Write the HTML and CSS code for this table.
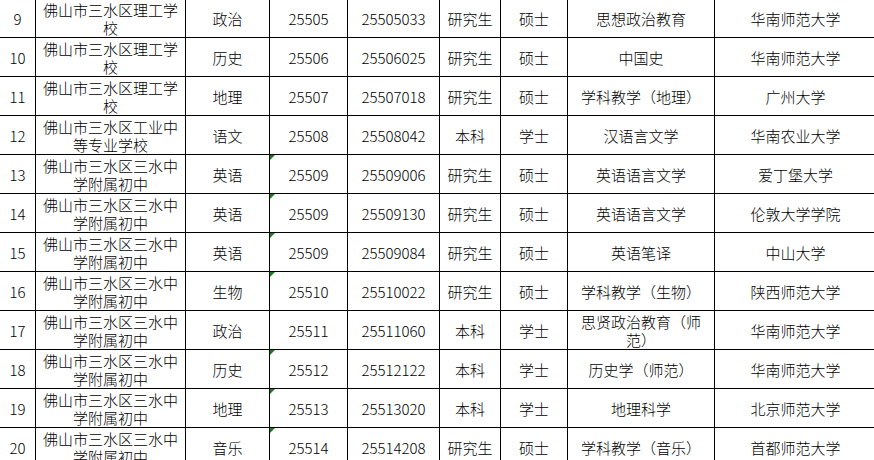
FILE: index.html
```html
<!DOCTYPE html>
<html lang="zh-CN">
<head>
<meta charset="utf-8">
<title>招聘名单</title>
<link rel="stylesheet" href="styles.css">
</head>
<body>
<table class="sheet">
<colgroup>
<col class="c1"><col class="c2"><col class="c3"><col class="c4"><col class="c5"><col class="c6"><col class="c7"><col class="c8"><col class="c9">
</colgroup>
<tbody>
<tr><td>9</td><td>佛山市三水区理工学校</td><td>政治</td><td>25505</td><td>25505033</td><td>研究生</td><td>硕士</td><td>思想政治教育</td><td>华南师范大学</td></tr>
<tr><td>10</td><td>佛山市三水区理工学校</td><td>历史</td><td>25506</td><td>25506025</td><td>研究生</td><td>硕士</td><td>中国史</td><td>华南师范大学</td></tr>
<tr><td>11</td><td>佛山市三水区理工学校</td><td>地理</td><td>25507</td><td>25507018</td><td>研究生</td><td>硕士</td><td>学科教学（地理）</td><td>广州大学</td></tr>
<tr><td>12</td><td>佛山市三水区工业中等专业学校</td><td>语文</td><td>25508</td><td>25508042</td><td>本科</td><td>学士</td><td>汉语言文学</td><td>华南农业大学</td></tr>
<tr><td>13</td><td>佛山市三水区三水中学附属初中</td><td>英语</td><td class="flag">25509</td><td>25509006</td><td>研究生</td><td>硕士</td><td>英语语言文学</td><td>爱丁堡大学</td></tr>
<tr><td>14</td><td>佛山市三水区三水中学附属初中</td><td>英语</td><td class="flag">25509</td><td>25509130</td><td>研究生</td><td>硕士</td><td>英语语言文学</td><td>伦敦大学学院</td></tr>
<tr><td>15</td><td>佛山市三水区三水中学附属初中</td><td>英语</td><td class="flag">25509</td><td>25509084</td><td>研究生</td><td>硕士</td><td>英语笔译</td><td>中山大学</td></tr>
<tr><td>16</td><td>佛山市三水区三水中学附属初中</td><td>生物</td><td class="flag">25510</td><td>25510022</td><td>研究生</td><td>硕士</td><td>学科教学（生物）</td><td>陕西师范大学</td></tr>
<tr><td>17</td><td>佛山市三水区三水中学附属初中</td><td>政治</td><td>25511</td><td>25511060</td><td>本科</td><td>学士</td><td>思贤政治教育（师范）</td><td>华南师范大学</td></tr>
<tr><td>18</td><td>佛山市三水区三水中学附属初中</td><td>历史</td><td class="flag">25512</td><td>25512122</td><td>本科</td><td>学士</td><td>历史学（师范）</td><td>华南师范大学</td></tr>
<tr><td>19</td><td>佛山市三水区三水中学附属初中</td><td>地理</td><td class="flag">25513</td><td>25513020</td><td>本科</td><td>学士</td><td>地理科学</td><td>北京师范大学</td></tr>
<tr><td>20</td><td>佛山市三水区三水中学附属初中</td><td>音乐</td><td class="flag">25514</td><td>25514208</td><td>研究生</td><td>硕士</td><td>学科教学（音乐）</td><td>首都师范大学</td></tr>
</tbody>
</table>
</body>
</html>
```

FILE: styles.css
```css
html, body {
  margin: 0;
  padding: 0;
  background: #ffffff;
  overflow: hidden;
}

body {
  width: 874px;
  height: 460px;
  font-family: "Noto Sans CJK SC", "Noto Sans", sans-serif;
  font-size: 15px;
  font-weight: 300;
  color: #000000;
}

.sheet {
  table-layout: fixed;
  border-collapse: separate;
  border-spacing: 0;
  width: 877px;
  margin-top: -1px;
}

.c1 { width: 36px; }
.c2 { width: 150px; }
.c3 { width: 84px; }
.c4 { width: 78px; }
.c5 { width: 92px; }
.c6 { width: 61px; }
.c7 { width: 67px; }
.c8 { width: 147px; }
.c9 { width: 162px; }

.sheet td {
  box-sizing: border-box;
  height: 39px;
  padding: 2px 6px 0 6px;
  border-right: 1px solid #000000;
  border-bottom: 1px solid #000000;
  text-align: center;
  vertical-align: middle;
  line-height: 18px;
  overflow: hidden;
  white-space: normal;
}

.sheet td:first-child {
  padding: 2px 0 0 0;
}

.sheet td.flag {
  position: relative;
}

.sheet td.flag::before {
  content: "";
  position: absolute;
  left: 0;
  top: 0;
  width: 0;
  height: 0;
  border-top: 5px solid #1f7a1f;
  border-right: 5px solid transparent;
}
```
